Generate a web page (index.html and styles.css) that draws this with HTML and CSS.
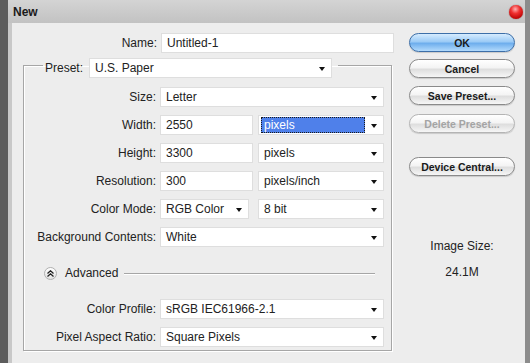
FILE: index.html
```
<!DOCTYPE html>
<html lang="en">
<head>
    <meta charset="UTF-8">
    <title>New</title>
    <link rel="stylesheet" href="styles.css">
</head>
<body>
    <div class="window">
        <div class="titlebar">
            <span class="title">New</span>
            <span class="close"></span>
        </div>
        <div class="body">
            <div class="form">
                <div class="name-row">
                    <label class="label">Name:</label>
                    <input class="field" type="text" value="Untitled-1">
                </div>
                <fieldset class="group">
                    <legend class="preset">
                        <span class="label">Preset:</span>
                        <div class="dropdown preset-select">U.S. Paper</div>
                    </legend>
                    <div class="rows first-rows">
                        <label class="label">Size:</label>
                        <div class="dropdown">Letter</div>

                        <label class="label">Width:</label>
                        <div class="pair">
                            <input class="field" type="text" value="2550">
                            <div class="dropdown"><span class="selected">pixels</span></div>
                        </div>

                        <label class="label">Height:</label>
                        <div class="pair">
                            <input class="field" type="text" value="3300">
                            <div class="dropdown">pixels</div>
                        </div>

                        <label class="label">Resolution:</label>
                        <div class="pair">
                            <input class="field" type="text" value="300">
                            <div class="dropdown">pixels/inch</div>
                        </div>

                        <label class="label">Color Mode:</label>
                        <div class="pair">
                            <div class="dropdown mode">RGB Color</div>
                            <div class="dropdown">8 bit</div>
                        </div>

                        <label class="label">Background Contents:</label>
                        <div class="dropdown">White</div>
                    </div>

                    <div class="advanced">
                        <span class="toggle">
                            <svg width="7" height="7" viewBox="0 0 7 7">
                                <path d="M0.5 3.5 L3.5 0.8 L6.5 3.5 M0.5 6.5 L3.5 3.8 L6.5 6.5" fill="none" stroke="#222" stroke-width="1.3"/>
                            </svg>
                        </span>
                        <span class="advanced-text">Advanced</span>
                        <span class="rule"></span>
                    </div>

                    <div class="rows">
                        <label class="label">Color Profile:</label>
                        <div class="dropdown">sRGB IEC61966-2.1</div>

                        <label class="label">Pixel Aspect Ratio:</label>
                        <div class="dropdown">Square Pixels</div>
                    </div>
                </fieldset>
            </div>

            <div class="side">
                <button class="btn btn-ok">OK</button>
                <button class="btn btn-cancel">Cancel</button>
                <button class="btn btn-save">Save Preset...</button>
                <button class="btn btn-delete" disabled>Delete Preset...</button>
                <button class="btn btn-device">Device Central...</button>
                <div class="image-size">Image Size:</div>
                <div class="image-value">24.1M</div>
            </div>
        </div>
    </div>
</body>
</html>
```

FILE: styles.css
```
* {
    margin: 0;
    padding: 0;
    box-sizing: border-box;
}

body {
    font-family: 'Liberation Sans', Arial, sans-serif;
    font-size: 12px;
    color: #222;
    background: #fff;
}

.window {
    width: 530px;
    height: 363px;
    display: flex;
    flex-direction: column;
    background: #c8c8c8;
    border-left: 8px solid #5c5c5c;
    border-right: 5px solid #8c8c8c;
}

/* title bar */
.titlebar {
    height: 23px;
    flex-shrink: 0;
    display: flex;
    align-items: center;
    justify-content: space-between;
    padding: 0 2px 0 5px;
    background: linear-gradient(#d4d4d4, #c2c2c2);
}

.title {
    font-weight: bold;
    font-size: 12px;
    color: #1a1a1a;
}

.close {
    width: 14px;
    height: 14px;
    border-radius: 50%;
    background: radial-gradient(circle at 45% 30%, #ffb0b0 0, #f03030 35%, #b80000 80%, #900 100%);
    box-shadow: 0 0 1px #700;
}

/* main area */
.body {
    flex: 1;
    margin-left: 4px;
    background: #ededed;
    display: flex;
    padding-top: 10px;
}

.form {
    width: 383px;
}

.label {
    text-align: right;
    white-space: nowrap;
    line-height: 20px;
}

.name-row {
    display: grid;
    grid-template-columns: 145px 233px;
    column-gap: 4px;
}

.field,
.dropdown {
    height: 20px;
    background: #fff;
    border: 1px solid #dedede;
    font-family: inherit;
    font-size: 12px;
    color: #222;
    padding-left: 5px;
    line-height: 18px;
    outline: none;
}

.field {
    width: 100%;
}

.dropdown {
    position: relative;
    white-space: nowrap;
}

.dropdown::after {
    content: '';
    position: absolute;
    right: 6px;
    top: 8px;
    border-left: 3px solid transparent;
    border-right: 3px solid transparent;
    border-top: 4px solid #111;
}

.selected {
    display: inline-block;
    width: 104px;
    height: 16px;
    margin: 1px 0 0 -3px;
    padding-left: 2px;
    line-height: 14px;
    background: #4f80ea;
    color: #fff;
    border: 1px dotted #1a1a1a;
}

/* group box */
.group {
    margin-left: 11px;
    width: 369px;
    border: 1px solid #a6a6a6;
    box-shadow: 1px 1px 0 #fff, inset 1px 1px 0 #fff;
    padding: 0 0 3px;
}

.preset {
    margin-left: 19px;
    padding: 5px 6px 0 2px;
    display: flex;
    align-items: center;
}

.preset-select {
    width: 243px;
    margin-left: 6px;
}

.rows {
    display: grid;
    grid-template-columns: 132px 224px;
    column-gap: 4px;
    row-gap: 8px;
}

.first-rows {
    padding-top: 9px;
}

.pair {
    display: grid;
    grid-template-columns: 93px 126px;
    justify-content: space-between;
}

.pair .mode {
    width: 89px;
}

.advanced {
    display: flex;
    align-items: center;
    height: 20px;
    margin: 16px 16px 16px 20px;
}

.toggle {
    width: 13px;
    height: 13px;
    border-radius: 50%;
    border: 1px solid #b0b0b0;
    background: linear-gradient(#ffffff, #e2e2e2);
    display: flex;
    align-items: center;
    justify-content: center;
}

.advanced-text {
    margin-left: 8px;
}

.rule {
    flex: 1;
    height: 1px;
    margin-left: 6px;
    background: #a6a6a6;
    box-shadow: 0 1px 0 #fff;
}

/* buttons column */
.side {
    width: 106px;
    margin-left: 14px;
    display: flex;
    flex-direction: column;
}

.btn {
    height: 19px;
    border-radius: 10px;
    border: 1px solid #8a8a8a;
    background: linear-gradient(#ffffff, #f4f4f4 45%, #dedede 55%, #f6f6f6);
    box-shadow: 0 1px 1px rgba(0, 0, 0, 0.15);
    font-family: inherit;
    font-size: 10.5px;
    font-weight: bold;
    color: #1a1a1a;
}

.btn-ok {
    border-color: #3d6fa8;
    background: linear-gradient(#d6ecfe, #9ccbf6 45%, #6eaeed 55%, #b2dafc);
}

.btn-cancel {
    margin-top: 7px;
}

.btn-save {
    margin-top: 8px;
}

.btn-delete {
    margin-top: 9px;
    color: #a4a4a4;
    border-color: #b4b4b4;
}

.btn-device {
    margin-top: 24px;
}

.image-size {
    margin-top: 63px;
    text-align: center;
    line-height: 14px;
}

.image-value {
    margin-top: 12px;
    text-align: center;
    line-height: 14px;
}
```
